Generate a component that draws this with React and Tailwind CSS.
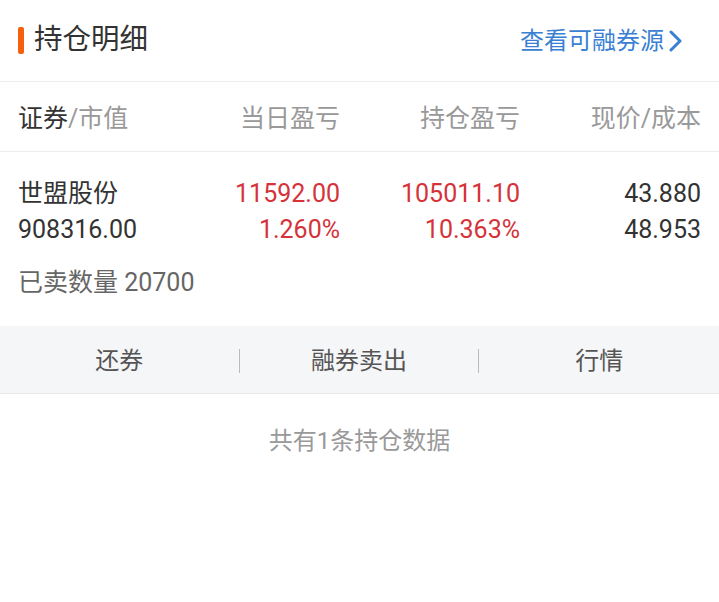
import React from 'react'

const FONT = { fontFamily: 'Roboto, "Noto Sans CJK SC", sans-serif' }

const HOLDINGS = [
  {
    name: '世盟股份',
    value: '908316.00',
    dayPnl: '11592.00',
    dayPct: '1.260%',
    posPnl: '105011.10',
    posPct: '10.363%',
    price: '43.880',
    cost: '48.953',
    sold: '20700',
  },
]

export default function App() {
  return (
    <div className="w-[719px] h-[602px] bg-white overflow-hidden" style={FONT}>
      {/* Header */}
      <div className="h-[82px] flex items-center justify-between pl-[18px] pr-[35px] border-b border-[#ececec]">
        <div className="flex items-center">
          <div className="w-[6px] h-[27px] rounded-[2px] bg-[#f5600f] mr-[10px]" />
          <span className="text-[28.5px] text-[#333] leading-none">持仓明细</span>
        </div>
        <div className="flex items-center text-[#3a7fd2]">
          <span className="text-[24px] leading-none">查看可融券源</span>
          <svg width="16" height="22" viewBox="0 0 16 22" className="ml-[4px]">
            <polyline points="3,2 12,11 3,20" fill="none" stroke="currentColor" strokeWidth="3" strokeLinecap="round" strokeLinejoin="round" />
          </svg>
        </div>
      </div>

      {/* Column headers */}
      <div className="h-[70px] pt-[4px] grid grid-cols-[142px_180px_180px_181px] items-center px-[18px] border-b border-[#ececec] text-[25px] text-[#999]">
        <div className="whitespace-nowrap"><span className="text-[#333]">证券</span>/市值</div>
        <div className="text-right">当日盈亏</div>
        <div className="text-right">持仓盈亏</div>
        <div className="text-right whitespace-nowrap">现价/成本</div>
      </div>

      {/* Rows */}
      {HOLDINGS.map((h) => (
        <div key={h.name} className="px-[18px] pt-[24px] pb-[25px]">
          <div className="grid grid-cols-[142px_180px_180px_181px] text-[25px] leading-[36px] text-[#333]">
            <div className="whitespace-nowrap">
              <div>{h.name}</div>
              <div>{h.value}</div>
            </div>
            <div className="text-right text-[#d5323a]">
              <div>{h.dayPnl}</div>
              <div>{h.dayPct}</div>
            </div>
            <div className="text-right text-[#d5323a]">
              <div>{h.posPnl}</div>
              <div>{h.posPct}</div>
            </div>
            <div className="text-right">
              <div>{h.price}</div>
              <div>{h.cost}</div>
            </div>
          </div>
          <div className="mt-[17px] text-[25px] leading-[36px] text-[#666]">已卖数量 {h.sold}</div>
        </div>
      ))}

      {/* Actions */}
      <div className="h-[68px] pt-[2px] grid grid-cols-3 items-center bg-[#f5f6f8] border-b border-[#e8e8e8] text-[24px] text-[#555]">
        <div className="text-center border-r border-[#bbb] leading-[24px]">还券</div>
        <div className="text-center border-r border-[#bbb] leading-[24px]">融券卖出</div>
        <div className="text-center leading-[24px]">行情</div>
      </div>

      <div className="pt-[31px] text-center text-[24px] leading-[32px] text-[#999]">共有1条持仓数据</div>
    </div>
  )
}
